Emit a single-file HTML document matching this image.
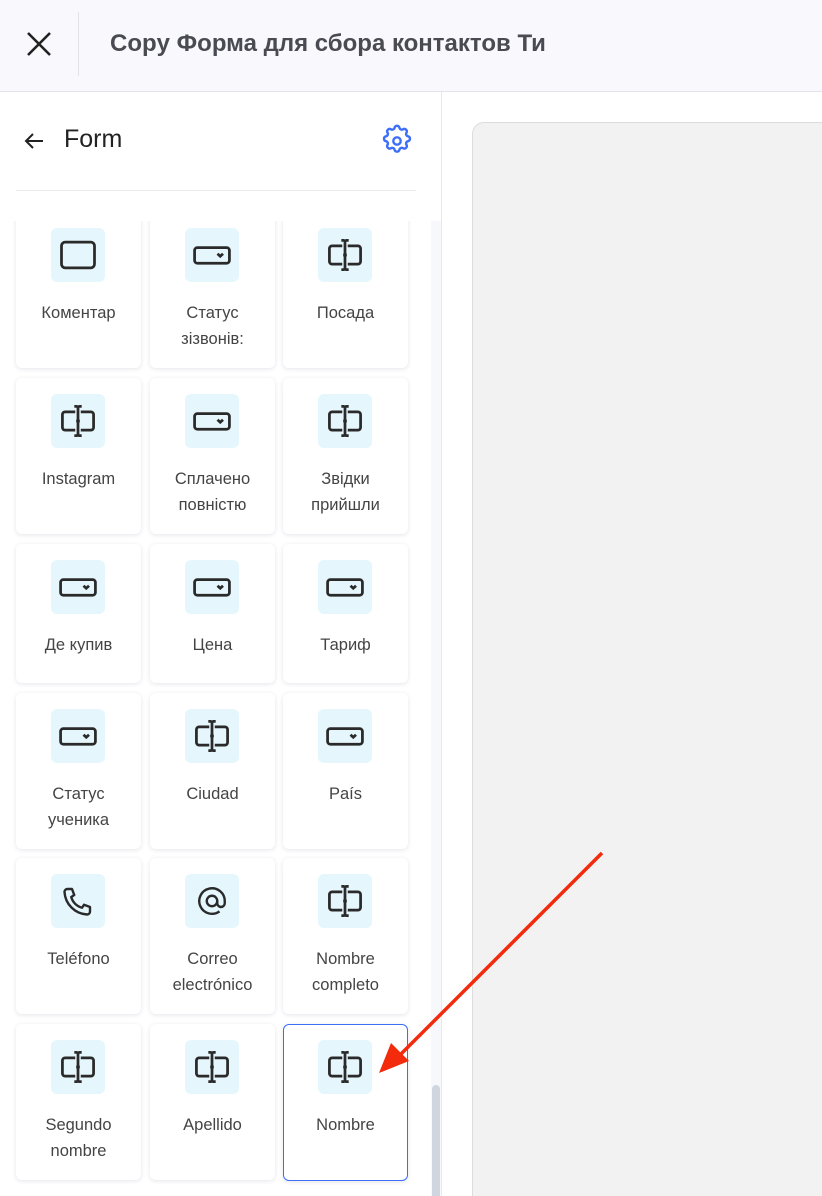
<!DOCTYPE html>
<html style="width:822px;height:1196px;overflow:hidden"><head><meta charset="utf-8"><style>
*{box-sizing:border-box;margin:0;padding:0}
body{width:822px;height:1196px;overflow:hidden;background:#fff;font-family:"Liberation Sans","DejaVu Sans",sans-serif;position:relative}
.hdr{position:absolute;left:0;top:0;width:822px;height:92px;background:#f9f9fd;border-bottom:1px solid #e2e2e8}
.hdr .sep{position:absolute;left:78px;top:12px;width:1px;height:64px;background:#e2e2e8}
.hdr .t{position:absolute;left:110px;top:30px;font-size:24px;font-weight:bold;color:#4a4a52}
.left{position:absolute;left:0;top:92px;width:442px;height:1104px;border-right:1px solid #e6e8ee;background:#fff}
.ftitle{position:absolute;left:64px;top:125px;font-size:25px;color:#222}
.hr{position:absolute;left:16px;top:190px;width:400px;height:1px;background:#ececf0}
.clip{position:absolute;left:0;top:221px;width:431px;height:975px;overflow:hidden}
.track{position:absolute;left:431px;top:221px;width:10px;height:975px;background:#f6f8fb}
.thumb{position:absolute;left:432px;top:1085px;width:8px;height:111px;background:#d0d6df;border-radius:4px 4px 0 0}
.card{position:absolute;width:125px;background:#fff;border-radius:6px;box-shadow:0 1px 5px rgba(30,40,80,.12);text-align:center}
.card.sel{border:1px solid #3d6ef7}
.ic{position:absolute;left:35px;top:16px;width:54px;height:54px;background:#e5f7fd;border-radius:6px;display:flex;align-items:center;justify-content:center}
.lb{position:absolute;left:0;right:0;top:88px;font-size:16.5px;line-height:26px;color:#444}
.canvas{position:absolute;left:472px;top:122px;width:360px;height:1100px;background:#f2f2f2;border:1px solid #dcdcdc;border-radius:12px}
</style></head><body>
<div class="hdr"><svg style="position:absolute;left:26px;top:31px" width="26" height="26" viewBox="0 0 26 26"><path d="M2 2L24 24M24 2L2 24" stroke="#222" stroke-width="2.6"/></svg><div class="sep"></div><div class="t">Copy Форма для сбора контактов Ти</div></div>
<div class="left"></div>
<svg style="position:absolute;left:23px;top:131px" width="22" height="20" viewBox="0 0 22 20"><path d="M20 10H3M10 3L3 10L10 17" stroke="#222" stroke-width="2" fill="none"/></svg>
<div class="ftitle">Form</div>
<svg style="position:absolute;left:380px;top:124px" width="34" height="34" viewBox="0 0 24 24" fill="none" stroke="#3d6ef7" stroke-width="1.7"><path d="M10.3 2.6c.4-1.8 3-1.8 3.4 0a1.7 1.7 0 0 0 2.6 1.1c1.5-.9 3.3.8 2.4 2.4a1.7 1.7 0 0 0 1.1 2.6c1.8.4 1.800 3 0 3.4a1.7 1.7 0 0 0-1.1 2.6c.9 1.5-.8 3.3-2.4 2.4a1.7 1.7 0 0 0-2.6 1.1c-.4 1.8-3 1.8-3.4 0a1.7 1.7 0 0 0-2.6-1.1c-1.5.9-3.3-.8-2.4-2.4a1.7 1.7 0 0 0-1.1-2.6c-1.8-.4-1.8-3 0-3.4a1.7 1.7 0 0 0 1.1-2.6c-.9-1.5.8-3.300 2.4-2.4a1.7 1.7 0 0 0 2.6-1.1z"/><circle cx="12" cy="12" r="2.6"/></svg>
<div class="hr"></div>
<div class="track"></div><div class="thumb"></div>
<svg width="0" height="0" style="position:absolute"><defs>
<symbol id="txt" viewBox="0 0 24 24"><g fill="none" stroke="#2a2a2a" stroke-width="1.5"><path d="M10.5 7H5a1.5 1.5 0 0 0-1.5 1.5v7A1.5 1.5 0 0 0 5 17h5.5M13.5 7H19a1.5 1.5 0 0 1 1.5 1.5v7A1.5 1.5 0 0 1 19 17h-5.5M12 4.8v14.4M10 4h1.2a.8.8 0 0 1 .8.8M14 4h-1.2a.8.8 0 0 0-.8.8M10 20h1.2a.8.8 0 0 0 .8-.8M14 20h-1.2a.8.8 0 0 1-.8-.8M11 12h2"/></g></symbol>
<symbol id="sel" viewBox="0 0 24 24"><g fill="none" stroke="#2a2a2a" stroke-width="1.5"><rect x="2.5" y="8" width="19" height="8.5" rx="1.5"/><path d="M15 11.3l1.5 1.4 1.5-1.4"/></g></symbol>
<symbol id="box" viewBox="0 0 24 24"><rect x="3" y="5" width="18" height="14" rx="2" fill="none" stroke="#2a2a2a" stroke-width="1.5"/></symbol>
<symbol id="ph" viewBox="0 0 24 24"><path d="M5 4h3l1.5 4-2 1.3a10 10 0 0 0 7.2 7.2l1.3-2 4 1.5v3a2 2 0 0 1-2 2A16 16 0 0 1 3 6a2 2 0 0 1 2-2" fill="none" stroke="#2a2a2a" stroke-width="1.6" stroke-linejoin="round"/></symbol>
<symbol id="at" viewBox="0 0 24 24"><g fill="none" stroke="#2a2a2a" stroke-width="1.6"><circle cx="12" cy="12" r="3.5"/><path d="M15.5 12v1.5a2.5 2.5 0 0 0 5 0V12a8.5 8.5 0 1 0-3.5 6.9"/></g></symbol>
</defs></svg>
<div class="clip">
<div style="position:relative;top:-221px">
<div class="card" style="left:16px;top:212px;height:156px"><div class="ic"><svg width="44" height="44"><use href="#box"/></svg></div><div class="lb">Коментар</div></div>
<div class="card" style="left:150px;top:212px;height:156px"><div class="ic"><svg width="44" height="44"><use href="#sel"/></svg></div><div class="lb">Статус<br>зізвонів:</div></div>
<div class="card" style="left:283px;top:212px;height:156px"><div class="ic"><svg width="44" height="44"><use href="#txt"/></svg></div><div class="lb">Посада</div></div>

<div class="card" style="left:16px;top:378px;height:156px"><div class="ic"><svg width="44" height="44"><use href="#txt"/></svg></div><div class="lb">Instagram</div></div>
<div class="card" style="left:150px;top:378px;height:156px"><div class="ic"><svg width="44" height="44"><use href="#sel"/></svg></div><div class="lb">Сплачено<br>повністю</div></div>
<div class="card" style="left:283px;top:378px;height:156px"><div class="ic"><svg width="44" height="44"><use href="#txt"/></svg></div><div class="lb">Звідки<br>прийшли</div></div>

<div class="card" style="left:16px;top:544px;height:139px"><div class="ic"><svg width="44" height="44"><use href="#sel"/></svg></div><div class="lb">Де купив</div></div>
<div class="card" style="left:150px;top:544px;height:139px"><div class="ic"><svg width="44" height="44"><use href="#sel"/></svg></div><div class="lb">Цена</div></div>
<div class="card" style="left:283px;top:544px;height:139px"><div class="ic"><svg width="44" height="44"><use href="#sel"/></svg></div><div class="lb">Тариф</div></div>

<div class="card" style="left:16px;top:693px;height:156px"><div class="ic"><svg width="44" height="44"><use href="#sel"/></svg></div><div class="lb">Статус<br>ученика</div></div>
<div class="card" style="left:150px;top:693px;height:156px"><div class="ic"><svg width="44" height="44"><use href="#txt"/></svg></div><div class="lb">Ciudad</div></div>
<div class="card" style="left:283px;top:693px;height:156px"><div class="ic"><svg width="44" height="44"><use href="#sel"/></svg></div><div class="lb">País</div></div>

<div class="card" style="left:16px;top:858px;height:156px"><div class="ic"><svg width="36" height="36"><use href="#ph"/></svg></div><div class="lb">Teléfono</div></div>
<div class="card" style="left:150px;top:858px;height:156px"><div class="ic"><svg width="36" height="36"><use href="#at"/></svg></div><div class="lb">Correo<br>electrónico</div></div>
<div class="card" style="left:283px;top:858px;height:156px"><div class="ic"><svg width="44" height="44"><use href="#txt"/></svg></div><div class="lb">Nombre<br>completo</div></div>

<div class="card" style="left:16px;top:1024px;height:156px"><div class="ic"><svg width="44" height="44"><use href="#txt"/></svg></div><div class="lb">Segundo<br>nombre</div></div>
<div class="card" style="left:150px;top:1024px;height:156px"><div class="ic"><svg width="44" height="44"><use href="#txt"/></svg></div><div class="lb">Apellido</div></div>
<div class="card sel" style="left:283px;top:1024px;height:157px"><div class="ic" style="left:34px;top:15px"><svg width="44" height="44"><use href="#txt"/></svg></div><div class="lb" style="top:87px">Nombre</div></div>
</div></div>
<div class="canvas" style="height:1074px;border-bottom:none;border-radius:12px 0 0 0"></div>
<svg style="position:absolute;left:0;top:0" width="822" height="1196"><line x1="602" y1="853" x2="400" y2="1055" stroke="#f42a0c" stroke-width="3.5"/><polygon points="379,1073 391,1043 409,1061" fill="#f42a0c"/></svg>
</body></html>
